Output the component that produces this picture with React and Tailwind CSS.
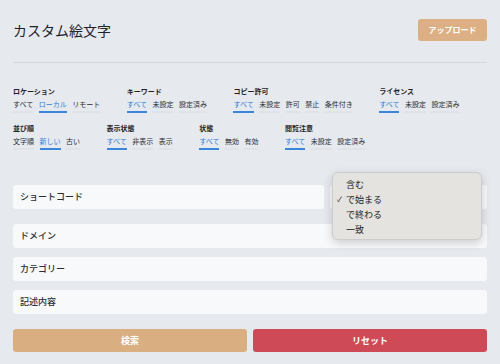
import { useState } from 'react'

const filters = [
  { label: 'ロケーション', options: ['すべて', 'ローカル', 'リモート'], selected: 1 },
  { label: 'キーワード', options: ['すべて', '未設定', '設定済み'], selected: 0 },
  { label: 'コピー許可', options: ['すべて', '未設定', '許可', '禁止', '条件付き'], selected: 0 },
  { label: 'ライセンス', options: ['すべて', '未設定', '設定済み'], selected: 0 },
  { label: '並び順', options: ['文字順', '新しい', '古い'], selected: 1 },
  { label: '表示状態', options: ['すべて', '非表示', '表示'], selected: 0 },
  { label: '状態', options: ['すべて', '無効', '有効'], selected: 0 },
  { label: '閲覧注意', options: ['すべて', '未設定', '設定済み'], selected: 0 },
]

const matchModes = ['含む', 'で始まる', 'で終わる', '一致']

const FilterGroup = ({ label, options, selected }) => (
  <div className="flex flex-col">
    <div className="text-[7px] leading-[9px] font-bold text-[#1f2328]">{label}</div>
    <div className="mt-[4px] flex gap-[5.5px]">
      {options.map((opt, i) => (
        <span
          key={opt}
          className={
            i === selected
              ? 'text-[7px] leading-[9px] pb-[2px] border-b-2 border-[#3a86dd] text-[#2f7fd8]'
              : 'text-[7px] leading-[9px] pb-[2px] border-b-2 border-[#dfe2e7] text-[#2a2d33]'
          }
        >
          {opt}
        </span>
      ))}
    </div>
  </div>
)

const Field = ({ children, className = '' }) => (
  <div
    className={`h-[24px] flex items-center px-[7px] rounded-[3px] bg-[#f8f9fb] text-[9px] font-medium text-[#2b2e33] ${className}`}
  >
    {children}
  </div>
)

export default function App() {
  const [mode] = useState(1)

  return (
    <div className="w-[500px] h-[364px] overflow-hidden bg-[#e6e9ee] px-[13px] font-['Noto_Sans_CJK_JP',sans-serif]">
      {/* Header */}
      <div className="pt-[19px] flex items-center justify-between">
        <h1 className="text-[14px] leading-[22px] text-[#1f2328]">カスタム絵文字</h1>
        <button className="h-[22px] w-[69px] rounded-[3px] bg-[#dcb084] text-white text-[8px] font-bold">
          アップロード
        </button>
      </div>
      <div className="mt-[21px] h-px bg-[#d3d7df]" />

      {/* Filters */}
      <div className="mt-[24px] flex flex-wrap gap-x-[26.5px] gap-y-[11px]">
        {filters.map((f) => (
          <FilterGroup key={f.label} {...f} />
        ))}
      </div>

      {/* Search fields */}
      <div className="mt-[35px] flex gap-[6px]">
        <Field className="flex-1">ショートコード</Field>
        <div className="relative w-[157px]">
          {/* select box, covered by its open menu */}
          <Field />
          <div className="absolute left-[2px] right-[5px] top-[-13px] h-[68px] rounded-[6px] border border-[#cdcdcb] bg-[#e4e3e0] shadow-[0_3px_10px_rgba(0,0,0,0.18)] pt-[4px] z-10">
            {matchModes.map((m, i) => (
              <div key={m} className="relative h-[15px] flex items-center pl-[13px] text-[9px] text-[#222]">
                {i === mode && <span className="absolute left-[4px] text-[7px] leading-[9px]">✓</span>}
                {m}
              </div>
            ))}
          </div>
        </div>
      </div>
      <Field className="mt-[15px]">ドメイン</Field>
      <Field className="mt-[9px]">カテゴリー</Field>
      <Field className="mt-[9px]">記述内容</Field>

      {/* Actions */}
      <div className="mt-[15px] flex gap-[6px]">
        <button className="flex-1 h-[23px] rounded-[3px] bg-[#d9af82] text-white text-[9px] font-bold">検索</button>
        <button className="flex-1 h-[23px] rounded-[3px] bg-[#cf4a57] text-white text-[9px] font-bold">リセット</button>
      </div>
    </div>
  )
}
